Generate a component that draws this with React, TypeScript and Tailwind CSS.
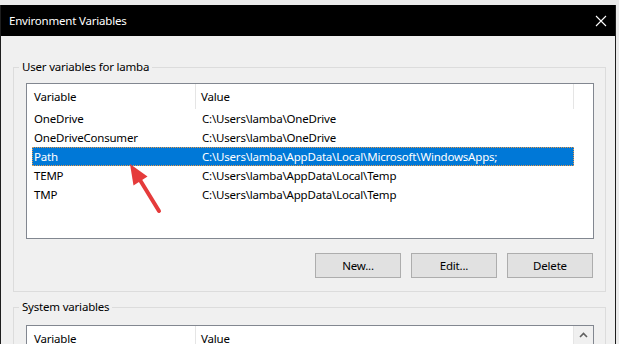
import React from "react";

const userVars = [
  { name: "OneDrive", value: "C:\\Users\\lamba\\OneDrive" },
  { name: "OneDriveConsumer", value: "C:\\Users\\lamba\\OneDrive" },
  { name: "Path", value: "C:\\Users\\lamba\\AppData\\Local\\Microsoft\\WindowsApps;", selected: true },
  { name: "TEMP", value: "C:\\Users\\lamba\\AppData\\Local\\Temp" },
  { name: "TMP", value: "C:\\Users\\lamba\\AppData\\Local\\Temp" },
];

const ListHeader = () => (
  <div className="flex h-[25px] w-[547px] items-center">
    <div className="flex h-full w-[169px] items-center border-r border-[#e5e5e5] pl-[7px]">Variable</div>
    <div className="flex h-full flex-1 items-center border-r border-[#e5e5e5] pl-[5px]">Value</div>
  </div>
);

const Button = ({ label }: { label: string }) => (
  <button className="flex h-[25px] w-[86px] items-center justify-center border border-[#adadad] bg-[#e1e1e1] text-[11.5px] tracking-[-0.2px] text-black">
    {label}
  </button>
);

export default function App() {
  return (
    <div
      className="h-[344px] w-[619px] overflow-hidden bg-[#ebebeb] pt-[5px] text-[11.5px] tracking-[-0.2px] text-black"
      style={{ fontFamily: '"Noto Sans", "Open Sans", sans-serif' }}
    >
      <div className="relative h-[339px] w-[616px] border-x border-[#1e1e1e] bg-[#f0f0f0]">
        {/* title bar */}
        <div className="flex h-[31px] items-center justify-between bg-black pl-[8px] pr-[7px] text-white">
          <span>Environment Variables</span>
          <svg width="12" height="12" viewBox="0 0 12 12" className="mr-[1px]">
            <path d="M1 1L11 11M11 1L1 11" stroke="#fff" strokeWidth="1.1" />
          </svg>
        </div>

        {/* user variables */}
        <div className="relative ml-[12px] mt-[31px] w-[593px] border border-[#dcdcdc] pb-[13px] pl-[12px] pt-[15px]">
          <span className="absolute -top-[10px] left-[5px] bg-[#f0f0f0] px-[3px] leading-[18px]">
            User variables for lamba
          </span>
          <div className="h-[156px] w-[568px] border border-[#828790] bg-white">
            <ListHeader />
            <div className="flex flex-col">
              {userVars.map((v) => (
                <div
                  key={v.name}
                  className={
                    v.selected
                      ? "ml-[5px] flex h-[19px] w-[542px] items-center border border-dotted border-[#e89a4a] bg-[#0078d7] text-white"
                      : "ml-[5px] flex h-[19px] w-[542px] items-center border border-transparent"
                  }
                >
                  <span className="w-[164px] pl-[1px]">{v.name}</span>
                  <span className="pl-[5px]">{v.value}</span>
                </div>
              ))}
            </div>
          </div>
          <div className="mt-[14px] flex w-[568px] justify-end gap-[10px] pr-[1px]">
            <Button label="New..." />
            <Button label="Edit..." />
            <Button label="Delete" />
          </div>
        </div>

        {/* system variables */}
        <div className="relative ml-[12px] mt-[15px] h-[60px] w-[593px] border border-[#dcdcdc] pl-[12px] pt-[17px]">
          <span className="absolute -top-[10px] left-[5px] bg-[#f0f0f0] px-[3px] leading-[18px]">
            System variables
          </span>
          <div className="flex h-[60px] w-[568px] border border-[#828790] bg-white">
            <ListHeader />
            <div className="flex flex-1 justify-center bg-[#f0f0f0] pt-[6px]">
              <svg width="9" height="6" viewBox="0 0 9 6">
                <path d="M1 5L4.5 1.5L8 5" stroke="#606060" strokeWidth="1.6" fill="none" />
              </svg>
            </div>
          </div>
        </div>

        {/* red annotation arrow */}
        <svg className="pointer-events-none absolute left-0 top-[-5px]" width="616" height="344">
          <line x1="139" y1="180" x2="158" y2="211" stroke="#e53b3b" strokeWidth="4" strokeLinecap="round" />
          <polygon points="129,164 132.5,185.5 146.5,176.5" fill="#e53b3b" />
        </svg>
      </div>
    </div>
  );
}
